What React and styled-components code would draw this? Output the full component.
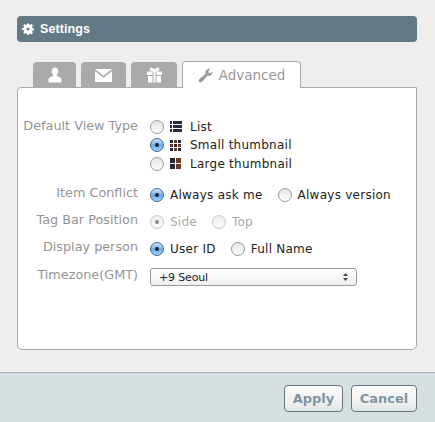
import React from "react";
import styled, { createGlobalStyle } from "styled-components";

const Global = createGlobalStyle`
  html, body { margin: 0; padding: 0; background: #eeeeee; }
  body { font-family: "DejaVu Sans", "Liberation Sans", sans-serif; font-size: 12px; }
`;

const Page = styled.div`
  width: 435px; height: 422px; display: flex; flex-direction: column; overflow: hidden; background: #eeeeee;
`;
const Main = styled.div`
  flex: 1; padding: 16px 18px 22px 17px; display: flex; flex-direction: column; min-height: 0;
`;
const Header = styled.div`
  height: 26px; flex: none; background: #637a84; border-radius: 4px; color: #fff;
  display: flex; align-items: center; gap: 6px; padding-left: 5px;
  font-family: "Liberation Sans", sans-serif; font-size: 12.5px; font-weight: bold; letter-spacing: 0.1px;
`;
const TabBar = styled.div`
  display: flex; align-items: flex-end; gap: 5px; padding-left: 16px; height: 46px; flex: none; margin-bottom: -1px; position: relative; z-index: 1;
`;
const Tab = styled.div`
  width: ${p => p.$w}px; height: 26px; background: #aaaaaa; border-radius: 4px 4px 0 0;
  display: flex; align-items: center; justify-content: center; box-sizing: border-box;
`;
const ActiveTab = styled.div`
  width: 119px; height: 27px; box-sizing: border-box; background: #fff; border: 1px solid #a9a9a9; border-bottom: none;
  border-radius: 4px 4px 0 0; display: flex; align-items: center; justify-content: center; gap: 6px;
  color: #999; font-size: 13.5px; font-weight: normal;
`;
const Panel = styled.div`
  flex: 1; background: #fff; border: 1px solid #a9a9a9; border-radius: 4px 0 5px 5px; padding: 31px 0 0 0;
  display: flex; flex-direction: column; box-sizing: border-box;
`;
const Row = styled.div`
  display: grid; grid-template-columns: 120px 1fr; column-gap: 12px; margin-bottom: ${p => p.$mb ?? 0}px;
`;
const Label = styled.div`
  color: #959595; text-align: right; font-size: 12.8px; line-height: 14px; margin-top: ${p => p.$mt ?? 0}px;
  margin-left: -10px; white-space: nowrap;
`;
const Stack = styled.div`
  display: flex; flex-direction: column; gap: 3.5px;
`;
const Inline = styled.div`
  display: flex; align-items: center; gap: 15px;
`;
const Option = styled.div`
  display: flex; align-items: center; gap: 6px; height: 15px; color: ${p => p.$disabled ? "#aaa" : "#222"}; font-size: 12px; letter-spacing: 0.25px;
`;
const IconSlot = styled.span`
  display: flex; margin-right: 2px;
`;
const Radio = styled.span`
  width: 14px; height: 14px; box-sizing: border-box; border-radius: 50%; flex: none; display: flex; align-items: center; justify-content: center;
  border: 1px solid ${p => p.$on ? "#46698f" : "#999"};
  background: ${p => p.$on ? "linear-gradient(#cfe4fb, #69a9ea 55%, #a9d3f8)" : "linear-gradient(#e4e4e4, #fff)"};
  ${p => p.$disabled && `border-color:#c8c8c8;background:linear-gradient(#f0f0f0,#fafafa);`}
  &::after {
    content: ""; display: ${p => p.$on ? "block" : "none"}; width: 4px; height: 4px; border-radius: 50%;
    background: ${p => p.$disabled ? "#888" : "#10243a"};
  }
`;
const Select = styled.div`
  width: 207px; height: 18px; box-sizing: border-box; border: 1px solid #9a9a9a; border-radius: 3px;
  background: linear-gradient(#fff, #f0f0f0); display: flex; align-items: center; justify-content: space-between;
  padding: 0 8px 0 8px; font-size: 11px; letter-spacing: -0.15px; color: #222; margin-top: 0;
`;
const Footer = styled.div`
  height: 50px; flex: none; box-sizing: border-box; background: #d6dfe2; border-top: 1px solid #a9b1b4;
  display: flex; justify-content: flex-end; align-items: flex-start; gap: 8px; padding: 12px 18px 0 0;
`;
const Button = styled.div`
  width: ${p => p.$w}px; height: 27px; box-sizing: border-box; border: 1px solid #66757c; border-radius: 4px;
  background: linear-gradient(#fafafa, #f3f3f3 55%, #e2e5e6); color: #7e95a3; font-weight: bold; font-size: 13px;
  display: flex; align-items: center; justify-content: center;
`;

const Gear = () => (
  <svg width="12" height="12" viewBox="0 0 12 12"><path fill="#fff" fillRule="evenodd" d="M5 .5h2l.3 1.500 1-.5L9.900 1l1 1.700-1 1.100.6 1v.1L12 5.500v2l-1.500.2-.5 1 .9 1.300-1.400 1.400-1.300-.9-1 .5L6.800 12H5.200L5 10.500l-1-.5-1.300.9L1.300 9.500l.9-1.300-.5-1L0 7V5l1.600-.3.5-1-.9-1.300L2.600 1l1.300.9 1-.4zM6 4.500a1.500 1.500 0 100 3 1.500 1.500 0 000-3z"/></svg>
);
const Person = () => (
  <svg width="16" height="16" viewBox="0 0 16 16"><path fill="#fff" d="M8 .5c2 0 3.300 1.500 3.300 3.600 0 1.600-.6 3-1.500 3.800v1c2 .7 4.700 1.600 4.700 3.400V15.500h-13V12.300c0-1.800 2.700-2.700 4.700-3.400v-1C5.300 7.100 4.700 5.700 4.700 4.100 4.700 2 6 .5 8 .5z"/></svg>
);
const Mail = () => (
  <svg width="17" height="13" viewBox="0 0 17 13"><path fill="#fff" d="M0 0h17L8.500 6.800zM0 2l8.500 6.700L17 2v11H0z"/></svg>
);
const Gift = () => (
  <svg width="17" height="16" viewBox="0 0 17 16"><path fill="#fff" fillRule="evenodd" d="M1 4.500h5.500V8H1zM10.500 4.500H16V8h-5.500zM2 9h4.500v6.500H2zM10.500 9H15v6.500h-4.500zM7.500 4.500h2v11h-2z"/><path fill="none" stroke="#fff" strokeWidth="1.600" d="M8.500 4C6.500 4 4.500 3.500 4.500 2.200c0-1.200 2.500-1.400 4 1.800 1.500-3.200 4-3 4-1.800C12.500 3.500 10.500 4 8.500 4z"/></svg>
);
const Wrench = () => (
  <svg width="15" height="15" viewBox="0 0 15 15"><path fill="#999" d="M14.500 3.500c.3 2.300-1.500 4.500-3.900 4.300-.5 0-.8-.1-1.100-.2l-5.200 6c-.9 1-2.300 1-3 .3-.8-.8-.7-2.100.2-2.900l6-5.200C7 3.200 8.300.9 11.500.5c.4 0 .8 0 1.100.1L10.300 3l.4 1.800 1.700.4z"/></svg>
);
const cells = {
  list: [[0,1,2,3],[3,1,9,3],[0,5,2,3],[3,5,9,3],[0,9,2,3],[3,9,9,3]],
  small: [[0,1,3,3],[4,1,3,3],[8,1,3,3],[0,5,3,3],[4,5,3,3],[8,5,3,3],[0,9,3,3],[4,9,3,3],[8,9,3,3]],
  large: [[0,1,5,5],[6,1,5,5],[0,7,5,5],[6,7,5,5]],
};
const GridIcon = ({ kind }) => (
  <IconSlot>
    <svg width="12" height="13" viewBox="0 0 12 13">
      {cells[kind].map((c, i) => <rect key={i} x={c[0]} y={c[1]} width={c[2]} height={c[3]} fill={kind === "list" ? "#2a2a38" : i % 2 ? "#6a3a24" : "#2a2430"} />)}
    </svg>
  </IconSlot>
);
const Arrows = () => (
  <svg width="5" height="8" viewBox="0 0 5 8"><path fill="#444" d="M2.500 0L5 3H0zM2.500 8L0 5h5z"/></svg>
);

export default function App() {
  return (
    <Page>
      <Global />
      <Main>
        <Header><Gear /><span>Settings</span></Header>
        <TabBar>
          <Tab $w={43}><Person /></Tab>
          <Tab $w={45}><Mail /></Tab>
          <Tab $w={46}><Gift /></Tab>
          <ActiveTab><Wrench /><span>Advanced</span></ActiveTab>
        </TabBar>
        <Panel>
          <Row $mb={16}>
            <Label>Default View Type</Label>
            <Stack>
              <Option><Radio /><GridIcon kind="list" /><span>List</span></Option>
              <Option><Radio $on /><GridIcon kind="small" /><span>Small thumbnail</span></Option>
              <Option><Radio /><GridIcon kind="large" /><span>Large thumbnail</span></Option>
            </Stack>
          </Row>
          <Row $mb={12}>
            <Label $mt={-1}>Item Conflict</Label>
            <Inline>
              <Option><Radio $on /><span>Always ask me</span></Option>
              <Option><Radio /><span>Always version</span></Option>
            </Inline>
          </Row>
          <Row $mb={12}>
            <Label $mt={-1}>Tag Bar Position</Label>
            <Inline>
              <Option $disabled><Radio $on $disabled /><span>Side</span></Option>
              <Option $disabled><Radio $disabled /><span>Top</span></Option>
            </Inline>
          </Row>
          <Row $mb={12}>
            <Label $mt={-1}>Display person</Label>
            <Inline>
              <Option><Radio $on /><span>User ID</span></Option>
              <Option><Radio /><span>Full Name</span></Option>
            </Inline>
          </Row>
          <Row>
            <Label>Timezone(GMT)</Label>
            <Select><span>+9 Seoul</span><Arrows /></Select>
          </Row>
        </Panel>
      </Main>
      <Footer>
        <Button $w={59}>Apply</Button>
        <Button $w={66}>Cancel</Button>
      </Footer>
    </Page>
  );
}
